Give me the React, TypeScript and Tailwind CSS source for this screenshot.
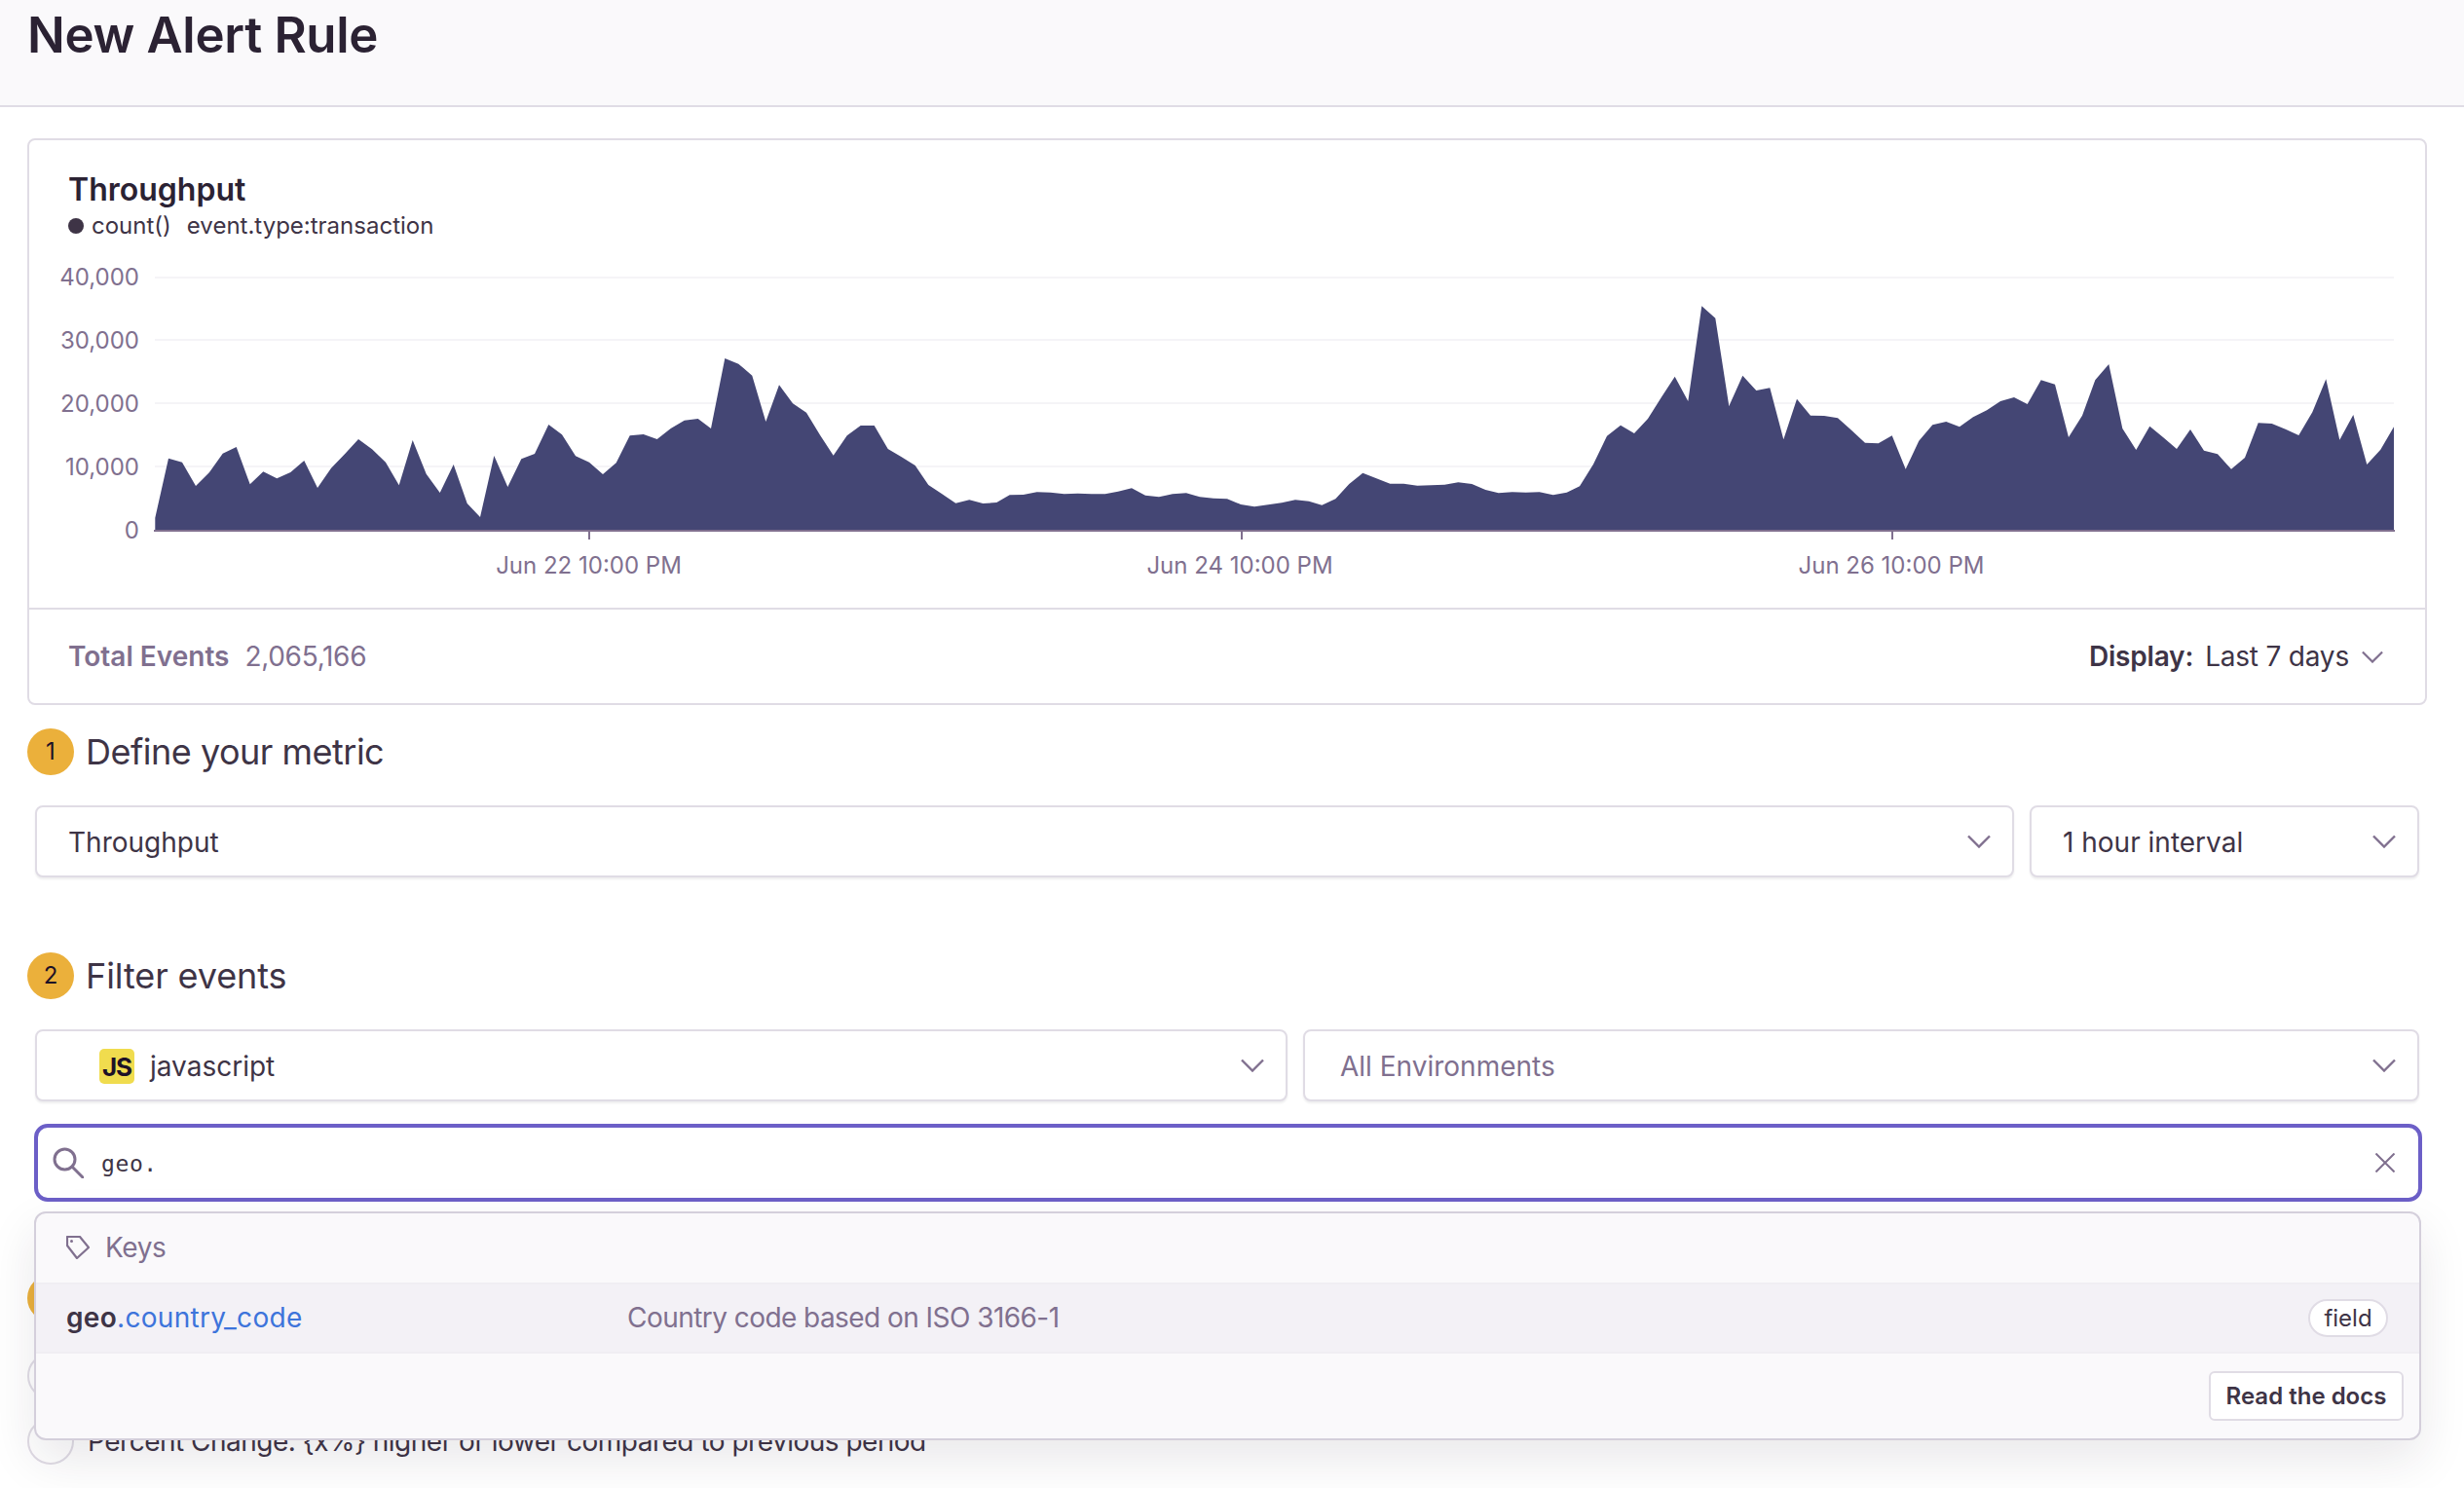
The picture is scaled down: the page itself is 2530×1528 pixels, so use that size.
const seg = (ox: number, pts: number[][]) => pts.map(([x, y]) => [ox + x / 3, 280 + y / 3]);

const points = [
  ...seg(140, [[58,795],[58,755],[99,572],[141,584],[183,657],[225,615],[266,557],[308,537],[350,652],[391,613],[433,634],[475,615],[517,579],[558,663],[600,602],[642,559],[684,513],[726,544],[768,584],[809,655],[851,516],[893,620],[935,678],[977,591],[1019,711],[1059,753],[1102,564],[1144,660],[1186,574],[1227,558],[1270,468],[1311,499],[1353,565],[1395,584],[1437,621],[1478,586]]),
  ...seg(640, [[20,502],[62,498],[104,513],[146,480],[188,455],[230,450],[270,480],[313,264],[355,281],[397,317],[439,459],[480,346],[522,403],[564,431],[606,500],[647,563],[689,502],[731,471],[773,471],[815,543],[857,568],[899,594],[940,654],[982,682],[1024,710],[1066,700],[1108,711],[1150,708],[1190,685],[1232,684],[1274,676],[1316,677],[1358,682],[1400,680],[1442,682],[1484,682]]),
  ...seg(1140, [[24,674],[66,664],[108,686],[150,691],[192,682],[234,679],[276,691],[318,695],[360,697],[402,714],[444,721],[486,715],[528,709],[570,700],[612,704],[652,716],[694,697],[736,651],[778,617],[820,634],[862,650],[904,650],[946,656],[988,655],[1030,653],[1072,646],[1114,651],[1156,669],[1196,679],[1238,676],[1280,677],[1322,676],[1364,685],[1406,677],[1446,658],[1488,590]]),
  ...seg(1640, [[30,503],[72,470],[114,495],[156,450],[197,385],[239,320],[280,396],[322,103],[364,140],[406,411],[448,317],[490,363],[532,355],[574,514],[615,389],[657,440],[699,441],[741,448],[783,485],[825,524],[866,526],[908,502],[950,605],[991,518],[1033,469],[1075,459],[1116,475],[1158,445],[1200,424],[1242,396],[1284,384],[1325,405],[1367,331],[1410,344],[1452,507],[1494,440]]),
  ...seg(2040, [[334,331],[376,282],[418,480],[460,546],[502,473],[544,508],[585,543],[627,483],[669,548],[711,559],[753,605],[795,570],[836,463],[878,465],[920,482],[961,501],[1003,430],[1045,328],[1087,515],[1129,438],[1171,591],[1213,545],[1254,475],[1254,795]]),
];
const areaPath = "M" + points.map(([x, y]) => `${x.toFixed(1)} ${y.toFixed(1)}`).join("L") + "Z";

function Chevron({ className = "w-[24px] h-[14px]" }: { className?: string }) {
  return (
    <svg viewBox="0 0 24 14" className={className} fill="none" stroke="#80708f" strokeWidth="2.4">
      <path d="M1 1.5L12 12.5L23 1.5" />
    </svg>
  );
}

function Step({ n, title, className }: { n: number; title: string; className: string }) {
  return (
    <div className="flex items-center h-[48px]">
      <div className="w-[48px] h-[48px] rounded-full bg-[#ebb03b] flex items-center justify-center text-[24px] text-[#1d1127] shrink-0">{n}</div>
      <div className={`ml-[12px] text-[36px] text-[#3e3446] ${className}`}>{title}</div>
    </div>
  );
}

function Select({ className, children }: { className: string; children: React.ReactNode }) {
  return (
    <div className={`h-[74px] bg-white border-2 border-[#e0dce5] rounded-[8px] shadow-[0_2px_2px_rgba(43,34,51,0.08)] flex items-center justify-between pr-[22px] ${className}`}>
      <div className="pt-[2px]">{children}</div>
      <Chevron />
    </div>
  );
}

export default function App() {
  return (
    <div className="relative w-[2530px] h-[1528px] overflow-hidden bg-white font-['Inter','Noto_Sans',sans-serif] text-[#3e3446]">
      <header className="h-[110px] bg-[#faf9fb] border-b-2 border-[#e0dce5] pl-[28px] pt-[10px]">
        <h1 className="text-[51px] leading-[52px] font-semibold tracking-[-0.3px] text-[#2b2233]">New Alert Rule</h1>
      </header>

      <main className="px-[28px]">
        <section className="mt-[32px] w-[2464px] h-[582px] border-2 border-[#e0dce5] rounded-[8px] flex flex-col">
          <div className="h-[120px] pl-[40px] pt-[30px]">
            <div className="text-[32px] leading-[42px] font-semibold tracking-[0px] text-[#2b2233]">Throughput</div>
            <div className="flex items-center text-[24px] leading-[32px]">
              <span className="w-[16px] h-[16px] rounded-full bg-[#3e3446] mr-[8px]" />
              <span>count()</span>
              <span className="ml-[16px]">event.type:transaction</span>
            </div>
          </div>
          <svg viewBox="30 264 2460 360" className="w-[2460px] h-[360px] block">
            {[285, 349, 414, 479].map((y) => (
              <line key={y} x1="159" x2="2458" y1={y} y2={y} stroke="#f5f4f7" strokeWidth="2" />
            ))}
            <path d={areaPath} fill="#444674" />
            <line x1="158" x2="2459" y1="545" y2="545" stroke="#80708f" strokeWidth="2" />
            {[605, 1275, 1943].map((x) => (
              <line key={x} x1={x} x2={x} y1="546" y2="554" stroke="#80708f" strokeWidth="2" />
            ))}
            <g fill="#80708f" fontSize="24" textAnchor="end">
              <text x="143" y="293">40,000</text>
              <text x="143" y="358">30,000</text>
              <text x="143" y="423">20,000</text>
              <text x="143" y="488">10,000</text>
              <text x="143" y="553">0</text>
            </g>
            <g fill="#80708f" fontSize="24" textAnchor="middle">
              <text x="604.5" y="589">Jun 22 10:00 PM</text>
              <text x="1273" y="589">Jun 24 10:00 PM</text>
              <text x="1942" y="589">Jun 26 10:00 PM</text>
            </g>
          </svg>
          <div className="flex-1 border-t-2 border-[#e0dce5] flex items-center justify-between pl-[40px] pr-[43px] text-[28px]">
            <div className="flex items-center text-[#80708f]">
              <span className="font-semibold">Total Events</span>
              <span className="ml-[16px] tracking-[-0.3px]">2,065,166</span>
            </div>
            <div className="flex items-center tracking-[-0.2px]">
              <span className="font-semibold">Display:</span>
              <span className="ml-[12px]">Last 7 days</span>
              <Chevron className="ml-[13px] w-[22px] h-[13px]" />
            </div>
          </div>
        </section>

        <div className="mt-[24px]">
          <Step n={1} title="Define your metric" className="tracking-[-0.5px]" />
        </div>
        <div className="mt-[31px] ml-[8px] flex gap-[16px] w-[2448px]">
          <Select className="flex-1 pl-[32px] text-[28px]">
            <span>Throughput</span>
          </Select>
          <Select className="w-[400px] pl-[32px] text-[28px]">
            <span>1 hour interval</span>
          </Select>
        </div>

        <div className="mt-[77px]">
          <Step n={2} title="Filter events" className="tracking-[-0.1px]" />
        </div>
        <div className="mt-[31px] ml-[8px] flex gap-[16px] w-[2448px]">
          <Select className="w-[1286px] pl-[64px] text-[28px]">
            <span className="flex items-center">
              <span className="w-[36px] h-[36px] rounded-[5px] bg-[#f0dc4e] flex items-center justify-center text-[26px] font-bold tracking-[-1px] text-[#1d1127] mr-[16px]">JS</span>
              javascript
            </span>
          </Select>
          <Select className="flex-1 pl-[36px] text-[28px] text-[#80708f]">
            <span>All Environments</span>
          </Select>
        </div>

        <div className="mt-[23px] ml-[7px] w-[2452px] h-[80px] border-4 border-[#6c5fc7] rounded-[14px] bg-white flex items-center pl-[15px] pr-[24px]">
          <svg viewBox="0 0 32 32" className="w-[32px] h-[32px] shrink-0" fill="none" stroke="#80708f" strokeWidth="3">
            <circle cx="12.5" cy="12.5" r="10.5" />
            <path d="M20 20L31 31" strokeLinecap="round" />
          </svg>
          <span className="ml-[18px] pt-[3px] font-['DejaVu_Sans_Mono',monospace] text-[23px] tracking-[0.6px] text-[#3e3446]">geo.</span>
          <svg viewBox="0 0 20 20" className="w-[20px] h-[20px] ml-auto" fill="none" stroke="#80708f" strokeWidth="2">
            <path d="M0.5 0.5L19.5 19.5M19.5 0.5L0.5 19.5" />
          </svg>
        </div>

        <div className="mt-[75px] flex items-center h-[48px]">
          <div className="w-[48px] h-[48px] rounded-full bg-[#ebb03b]" />
        </div>
        <div className="mt-[32px] flex items-center h-[48px]">
          <div className="w-[48px] h-[48px] rounded-full border-2 border-[#e0dce5]" />
        </div>
        <div className="mt-[19px] flex items-center h-[48px]">
          <div className="w-[48px] h-[48px] rounded-full border-2 border-[#e0dce5]" />
          <span className="ml-[14px] text-[28px] tracking-[-0.5px]">Percent Change: {"{x%}"} higher or lower compared to previous period</span>
        </div>
      </main>

      <div className="absolute left-[35px] top-[1244px] w-[2451px] h-[235px] bg-[#faf9fb] border-2 border-[#d4cfdb] rounded-[12px] shadow-[0_20px_50px_rgba(43,34,51,0.1)] flex flex-col overflow-hidden">
        <div className="h-[71px] flex items-center pl-[31px] pb-[1px] text-[#80708f] text-[28px]">
          <svg viewBox="-1 -1 24 24" className="w-[24px] h-[24px]" fill="none" stroke="#80708f" strokeWidth="2.2" strokeLinejoin="round">
            <path d="M0 0H13L22 11L10 22L0 9Z" />
            <circle cx="4.5" cy="4.5" r="1.5" fill="#80708f" stroke="none" />
          </svg>
          <span className="ml-[16px] tracking-[-0.4px]">Keys</span>
        </div>
        <div className="h-[73px] border-y-2 border-[#f0eef3] bg-[#f3f1f6] flex items-center pl-[31px] pr-[32px] text-[28px]">
          <span className="w-[576px] tracking-[0.3px] pb-[1px]">
            <span className="font-semibold">geo</span>
            <span className="text-[#3d74db]">.country_code</span>
          </span>
          <span className="text-[#80708f] tracking-[-0.55px] pb-[1px]">Country code based on ISO 3166-1</span>
          <span className="ml-auto h-[39px] w-[82px] bg-white border-2 border-[#e0dce5] rounded-full flex items-center justify-center text-[24px]">field</span>
        </div>
        <div className="flex-1 flex items-start justify-end pr-[16px] pt-[18px]">
          <div className="w-[200px] h-[51px] bg-white border-2 border-[#e0dce5] rounded-[6px] flex items-center justify-center text-[24px] font-semibold">Read the docs</div>
        </div>
      </div>
    </div>
  );
}
